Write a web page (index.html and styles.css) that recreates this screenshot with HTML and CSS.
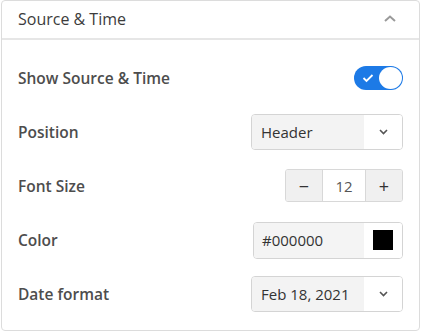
FILE: index.html
```html
<!DOCTYPE html>
<html>
<head>
<meta charset="utf-8">
<link rel="stylesheet" href="styles.css">
</head>
<body>
<div class="card">
  <div class="card-header">
    <span class="title">Source &amp; Time</span>
    <svg class="chev-up" width="12" height="7" viewBox="0 0 12 7"><path d="M1 6 L6 1.5 L11 6" fill="none" stroke="#9a9a9a" stroke-width="2"/></svg>
  </div>
  <div class="card-body">
    <div class="row">
      <span class="label">Show Source &amp; Time</span>
      <div class="toggle">
        <svg class="check" width="12" height="10" viewBox="0 0 12 10"><path d="M1.5 5 L4.5 8 L10.5 2" fill="none" stroke="#fff" stroke-width="1.8"/></svg>
        <span class="knob"></span>
      </div>
    </div>
    <div class="row">
      <span class="label">Position</span>
      <div class="select">
        <span class="select-text">Header</span>
        <span class="select-btn"><svg width="9" height="6" viewBox="0 0 9 6"><path d="M1 1 L4.5 4.5 L8 1" fill="none" stroke="#555" stroke-width="1.6"/></svg></span>
      </div>
    </div>
    <div class="row">
      <span class="label">Font Size</span>
      <div class="stepper">
        <span class="step-btn">&minus;</span>
        <span class="step-val">12</span>
        <span class="step-btn">+</span>
      </div>
    </div>
    <div class="row">
      <span class="label">Color</span>
      <div class="select color">
        <span class="select-text">#000000</span>
        <span class="select-btn"><span class="swatch"></span></span>
      </div>
    </div>
    <div class="row">
      <span class="label">Date format</span>
      <div class="select">
        <span class="select-text">Feb 18, 2021</span>
        <span class="select-btn"><svg width="9" height="6" viewBox="0 0 9 6"><path d="M1 1 L4.5 4.5 L8 1" fill="none" stroke="#555" stroke-width="1.6"/></svg></span>
      </div>
    </div>
  </div>
</div>
</body>
</html>
```
FILE: styles.css
```css
* { box-sizing: border-box; }
body {
  margin: 0;
  font-family: "Open Sans", "Noto Sans", sans-serif;
  background: #fff;
}
.card {
  margin-left: 1px;
  width: 419px;
  height: 331px;
  border: 1px solid #dcdcdc;
  border-radius: 4px;
  background: #fff;
}
.card-header {
  height: 39px;
  border-bottom: 2px solid #e6e6e6;
  display: flex;
  align-items: center;
  justify-content: space-between;
  padding: 0 23px 0 16px;
}
.title {
  font-size: 16px;
  color: #3c3c3c;
  line-height: 20px;
  margin-top: -1px;
}
.chev-up { margin-top: -2px; }
.card-body {
  padding: 20px 16px 0 16px;
  display: flex;
  flex-direction: column;
  gap: 18px;
}
.row {
  height: 36px;
  display: flex;
  align-items: center;
  justify-content: space-between;
}
.label {
  font-size: 15.5px;
  font-weight: 600;
  color: #4d4d4d;
}
.toggle {
  width: 49px;
  height: 24px;
  border-radius: 12px;
  background: #1d7ae6;
  display: flex;
  align-items: center;
  justify-content: space-between;
  padding: 0 1px 0 8px;
}
.knob {
  width: 23px;
  height: 22px;
  border-radius: 50%;
  background: #fff;
}
.select {
  width: 152px;
  height: 36px;
  border: 1px solid #d4d4d4;
  border-radius: 4px;
  display: flex;
  overflow: hidden;
}
.select.color {
  width: 150px;
  height: 37px;
}
.select-text {
  flex: 1;
  background: #f3f3f3;
  font-size: 15px;
  color: #333;
  display: flex;
  align-items: center;
  padding-left: 9px;
}
.color .select-text { background: #f4f4f4; padding-left: 8px; }
.select-btn {
  width: 38px;
  background: #fff;
  display: flex;
  align-items: center;
  justify-content: center;
}
.swatch {
  width: 20px;
  height: 20px;
  background: #000;
}
.stepper {
  width: 118px;
  height: 33px;
  border: 1px solid #d8d8d8;
  border-radius: 3px;
  display: flex;
  overflow: hidden;
  margin-top: -1px;
}
.step-btn {
  width: 36px;
  background: #f0f0f0;
  display: flex;
  align-items: center;
  justify-content: center;
  font-size: 18px;
  color: #333;
}
.step-val {
  flex: 1;
  border-left: 1px solid #d8d8d8;
  border-right: 1px solid #d8d8d8;
  background: #fff;
  display: flex;
  align-items: center;
  justify-content: center;
  font-size: 15px;
  color: #555;
}
```
